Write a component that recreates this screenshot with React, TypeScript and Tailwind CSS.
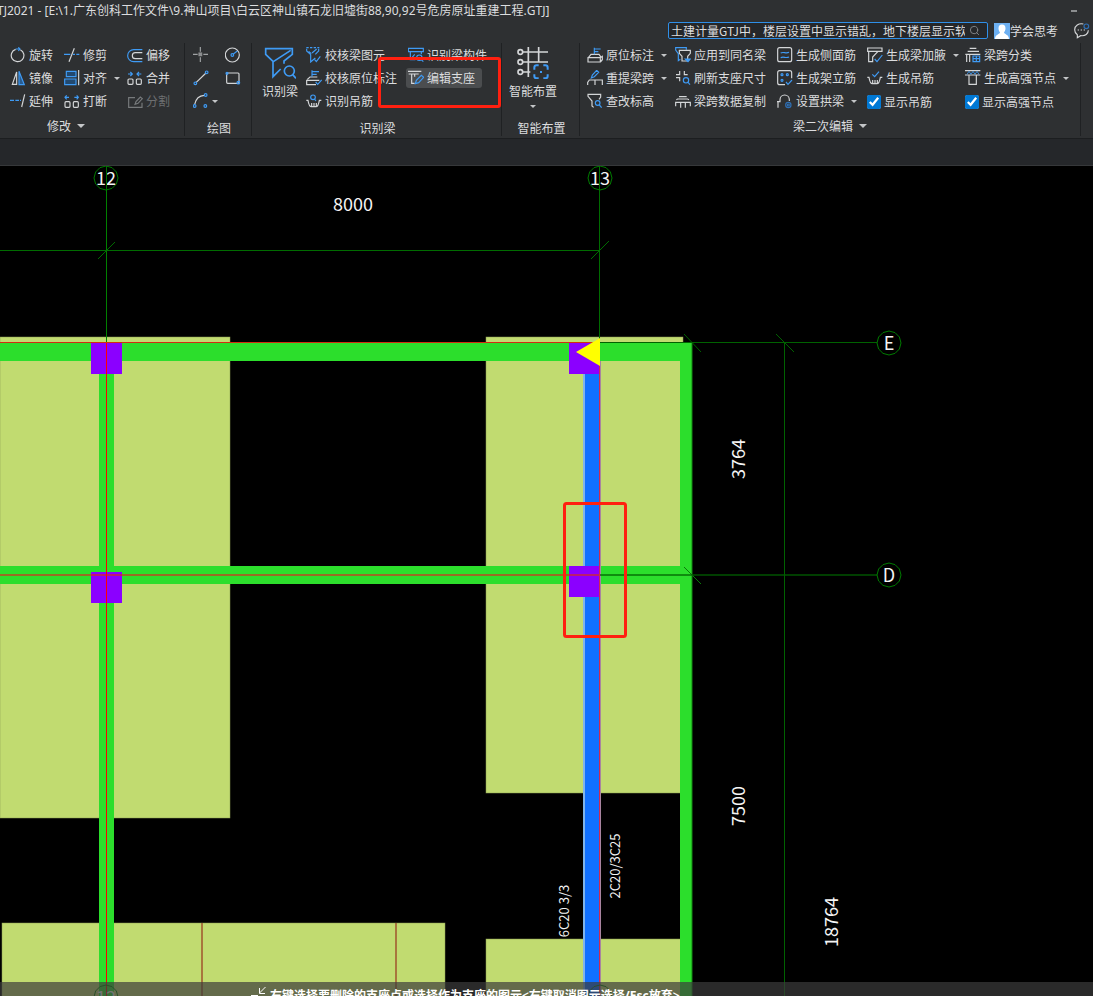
import React, { useState } from 'react'
import clsx from 'clsx'
import { Search } from 'lucide-react'

const W = '#d4d6d8'
const B = '#3f9bf5'

interface GlyphProps {
  children: React.ReactNode
  className?: string
  size?: number
}

// Small ribbon glyphs are drawn on a 48 unit grid, three units per pixel
function Glyph({ children, className = 'h-4 w-4', size = 48 }: GlyphProps) {
  return (
    <svg className={clsx('shrink-0', className)} viewBox={`0 0 ${size} ${size}`} fill="none" stroke={W} strokeWidth={3.5} aria-hidden="true">
      {children}
    </svg>
  )
}

const stamp = (
  <>
    <path d="M4 32L12 22H36L43 32M3 32H40V45H3ZM40 45L46 38V28L40 32" />
    <path d="M22 22V2M22 6H41M22 14H34" stroke={B} />
  </>
)

const basket = <path d="M1 22H6C8 34 12 41 16 41H30C34 41 38 34 40 22H46M17 30V40M24 30V40M31 30V40" />

const icons = {
  rotate: (
    <>
      <path d="M31 8A19 19 0 1 1 17 7" />
      <path d="M17 6H29M25 1L30 6L25 12" stroke={B} />
    </>
  ),
  mirror: (
    <>
      <path d="M20 6V43H7Z" />
      <path d="M27 4L43 44H27Z" stroke={B} fill="#2a5c8f" />
    </>
  ),
  extend: (
    <>
      <path d="M0 22H12M16 22H27M30 22H33" stroke={B} />
      <path d="M44 4L35 42" />
    </>
  ),
  trim: (
    <>
      <path d="M0 22H19M27 22H33M37 22H46" stroke={B} />
      <path d="M31 4L15 44" />
    </>
  ),
  align: (
    <>
      <path d="M7 4H36V20H7ZM2 27H36V44H2Z" stroke={B} fill="#22496f" />
      <path d="M44 0V46" />
    </>
  ),
  breakUp: (
    <>
      <rect x="3" y="26" width="15" height="17" rx="3" />
      <rect x="28" y="26" width="15" height="17" rx="3" />
      <path d="M15 13H3M8 7L3 13L8 19M31 13H43M38 7L43 13L38 19" stroke={B} />
    </>
  ),
  merge: (
    <>
      <rect x="3" y="27" width="15" height="16" rx="3" />
      <rect x="28" y="27" width="15" height="16" rx="3" />
      <path d="M3 12H15M10 6L16 12L10 18M43 12H31M36 6L30 12L36 18" stroke={B} />
    </>
  ),
  offset: (
    <>
      <path d="M46 8H20A18 18 0 0 0 20 44H46" stroke={B} />
      <path d="M46 17H25A9 9 0 0 0 25 35H46" />
    </>
  ),
  split: <path d="M24 14H5V43H45V29M24 34L27 26L40 12L46 17L33 31Z" stroke="#777a7c" />,
  point: (
    <>
      <path d="M22 0V14M22 31V45M0 22H14M31 22H45" stroke="#a0a2a4" />
      <rect x="18" y="18" width="8" height="8" stroke="#8c8e90" fill="#8c8e90" />
    </>
  ),
  circle: (
    <>
      <circle cx="22" cy="24" r="21" />
      <path d="M25 21L37 12" stroke={B} />
      <circle cx="22" cy="24" r="4" stroke={B} />
    </>
  ),
  line: (
    <>
      <path d="M9 38L39 9" />
      <circle cx="7" cy="40" r="4" stroke={B} />
      <circle cx="41" cy="7" r="4" stroke={B} />
    </>
  ),
  rect: (
    <>
      <rect x="5" y="9" width="37" height="31" rx="3" />
      <circle cx="6" cy="10" r="3" stroke={B} />
      <circle cx="40" cy="38" r="4" stroke={B} />
    </>
  ),
  arc: (
    <>
      <path d="M5 34C8 20 18 8 34 7" />
      <circle cx="5" cy="39" r="4" stroke={B} />
      <circle cx="38" cy="6" r="4" stroke={B} />
      <circle cx="37" cy="39" r="4" stroke={B} />
    </>
  ),
  checkBeam: (
    <>
      <path d="M1 2H40" stroke={B} strokeDasharray="7 4" />
      <path d="M2 5V12L14 23V45L28 33M38 5V12L28 22M8 13L16 20M32 6L18 18M26 38L31 44L43 28" stroke={B} />
    </>
  ),
  checkStamp: (
    <>
      <path d="M30 44H2V31H40M4 28L12 21H34" />
      <path d="M18 20V1M18 5H39M18 13H32M29 36L35 43L47 30" stroke={B} />
    </>
  ),
  findHook: (
    <>
      {basket}
      <circle cx="21" cy="13" r="7" stroke={B} />
      <path d="M26 19L30 24" stroke={B} />
    </>
  ),
  findPart: (
    <>
      <path d="M1 4H46V14H1ZM7 14V38H22M40 14V22M7 38L20 22" stroke={B} />
      <circle cx="34" cy="32" r="8" stroke={B} />
      <path d="M40 38L46 44" stroke={B} />
    </>
  ),
  editSupport: (
    <>
      <path d="M0 4H40M2 12H32M11 12V40H20M20 12V20" />
      <path d="M22 41L25 31L40 16L47 22L32 38Z" stroke={B} />
    </>
  ),
  stamp,
  respan: (
    <>
      <path d="M2 45V37L7 30H46V45M24 30V45" />
      <path d="M13 24L16 15L29 1L35 7L22 20Z" stroke={B} />
    </>
  ),
  findLevel: (
    <>
      <path d="M20 43L15 39V24L3 10V4H41V12L36 19" />
      <circle cx="32" cy="30" r="7" stroke={B} />
      <path d="M37 36L44 44" stroke={B} />
    </>
  ),
  applyName: (
    <>
      <path d="M16 37L10 41V20L2 9V2H34V8" stroke={B} />
      <path d="M13 10H46V19L38 28V42H21V28L13 19Z" />
      <path d="M31 36H46L39 44Z" stroke={B} fill={B} />
    </>
  ),
  refresh: (
    <>
      <path d="M14 3V14H3M28 3V14H38M14 34V23H3" />
      <circle cx="33" cy="31" r="8" stroke={B} />
      <path d="M39 37L45 44" stroke={B} />
    </>
  ),
  copySpan: <path d="M12 11H35M4 20L8 18H38L42 20M2 40V28H46V40M17 28V44M31 28V44" />,
  sideBar: (
    <>
      <rect x="2" y="2" width="42" height="42" rx="6" />
      <path d="M11 18C20 13 26 21 36 16M11 32C20 27 26 35 36 30" stroke={B} />
    </>
  ),
  frameBar: (
    <>
      <path d="M24 44H8Q2 44 2 38V8Q2 2 8 2H38Q44 2 44 8V25" />
      <g stroke={B}>
        <circle cx="15" cy="14" r="3" />
        <circle cx="31" cy="14" r="3" />
        <circle cx="15" cy="31" r="3" />
        <path d="M27 36L33 43L45 30" />
      </g>
    </>
  ),
  arch: (
    <>
      <path d="M3 44V24M0 26H9V20A14 14 0 0 1 37 20V24" />
      <circle cx="34" cy="36" r="8" stroke="#2e6fb5" />
      <circle cx="34" cy="36" r="3" stroke="#2e6fb5" />
    </>
  ),
  haunch: (
    <>
      <path d="M2 3H45V13H2ZM5 13V44H17V30L33 13" />
      <path d="M23 36L30 44L46 24" stroke={B} />
    </>
  ),
  makeHook: (
    <>
      {basket}
      <path d="M16 13L23 20L36 5" stroke={B} />
    </>
  ),
  classify: (
    <>
      <path d="M14 4H34M8 13H42M1 22H46M5 22V45M14 22V45" />
      <path d="M24 27H44V44H24ZM34 27V44M24 35H44" stroke={B} />
    </>
  ),
  node: (
    <>
      <path d="M0 2H46M0 15H46M12 15V43H34V15" />
      <path d="M6 13L12 4L18 13L24 4L30 13L36 4L42 13" stroke={B} strokeWidth={2.5} />
    </>
  ),
}

type IconName = keyof typeof icons

function Caret({ className, large }: { className?: string; large?: boolean }) {
  return (
    <svg
      className={clsx('shrink-0', large ? 'h-1 w-2' : 'h-[3px] w-1.5', className)}
      viewBox="0 0 6 3"
      preserveAspectRatio="none"
      fill="#c4c6c8"
      aria-hidden="true"
    >
      <path d="M0 0H6L3 3Z" />
    </svg>
  )
}

interface ToolProps {
  icon: IconName
  label?: string
  caret?: boolean
  disabled?: boolean
  active?: boolean
  title?: string
}

function Tool({ icon, label, caret, disabled, active, title }: ToolProps) {
  return (
    <button
      type="button"
      disabled={disabled}
      aria-label={label ?? title}
      className={clsx(
        'flex h-4 w-max items-center gap-[3px] rounded-[3px] whitespace-nowrap',
        active && '-mx-0.5 -my-0.5 h-5 bg-[#4b4d4f] pr-[7px] pl-0.5',
        disabled && 'text-[#6d6f71]'
      )}
    >
      <Glyph>{icons[icon]}</Glyph>
      {label}
      {caret && <Caret className={label ? 'ml-1' : ''} />}
    </button>
  )
}

function Check({ label }: { label: string }) {
  const [on, setOn] = useState(true)
  return (
    <label className="flex h-[18px] w-max items-center gap-[3px] whitespace-nowrap">
      <input type="checkbox" checked={on} onChange={() => setOn(!on)} className="h-3.5 w-3.5 accent-[#0078d4]" />
      {label}
    </label>
  )
}

function Column({ children }: { children: React.ReactNode }) {
  return <div className="flex flex-col gap-[7px]">{children}</div>
}

interface GroupProps {
  title: string
  menu?: boolean
  className: string
  titleClass?: string
  children: React.ReactNode
}

function Group({ title, menu, className, titleClass, children }: GroupProps) {
  return (
    <section className={clsx('relative flex h-[93px] shrink-0 flex-col border-r border-[#1f2123] pt-1', className)}>
      <div className="h-[71px]">{children}</div>
      <div className={clsx('flex justify-center leading-4', titleClass)}>
        {menu ? (
          <button type="button" className="flex items-center gap-1.5">
            {title}
            <Caret large />
          </button>
        ) : (
          <span className="pt-0.5 pl-0.5">{title}</span>
        )}
      </div>
    </section>
  )
}

function Ribbon() {
  return (
    <nav className="flex h-[100px] border-b border-[#1c1e20] pt-1">
      <Group title="修改" menu className="w-[185px]" titleClass="pr-[52px]">
        <div className="grid grid-cols-[54px_63px_1fr] pl-2.5">
          <Column>
            <Tool icon="rotate" label="旋转" />
            <Tool icon="mirror" label="镜像" />
            <Tool icon="extend" label="延伸" />
          </Column>
          <Column>
            <Tool icon="trim" label="修剪" />
            <Tool icon="align" label="对齐" caret />
            <Tool icon="breakUp" label="打断" />
          </Column>
          <Column>
            <Tool icon="offset" label="偏移" />
            <Tool icon="merge" label="合并" />
            <Tool icon="split" label="分割" disabled />
          </Column>
        </div>
      </Group>

      <Group title="绘图" className="w-[67px]">
        <div className="grid grid-cols-[32px_1fr] pl-2">
          <Column>
            <Tool icon="point" title="点" />
            <Tool icon="line" title="直线" />
            <Tool icon="arc" title="弧" caret />
          </Column>
          <Column>
            <Tool icon="circle" title="圆" />
            <Tool icon="rect" title="矩形" />
          </Column>
        </div>
      </Group>

      <Group title="识别梁" className="w-[250px]">
        <div className="grid grid-cols-[44px_102px_1fr] pl-2.5">
          <button type="button" className="flex w-9 flex-col items-center gap-1 leading-4 whitespace-nowrap">
            <Glyph className="h-8 w-8" size={96}>
              <g stroke={B} strokeWidth={5}>
                <path d="M50 66L27 89V43L5 22V5H85V22L60 42V50M80 10L28 44" />
                <circle cx="76" cy="72" r="15" />
                <path d="M86 83L96 94" />
              </g>
            </Glyph>
            识别梁
          </button>
          <Column>
            <Tool icon="checkBeam" label="校核梁图元" />
            <Tool icon="checkStamp" label="校核原位标注" />
            <Tool icon="findHook" label="识别吊筋" />
          </Column>
          <Column>
            <Tool icon="findPart" label="识别梁构件" />
            <Tool icon="editSupport" label="编辑支座" active />
          </Column>
        </div>
        {/* 标记框 */}
        <div className="pointer-events-none absolute top-3.5 left-[126px] h-[51px] w-[123px] rounded-[3px] border-3 border-[#ff2010]" />
      </Group>

      <Group title="智能布置" className="w-[78px]">
        <button type="button" className="ml-[7px] flex w-12 flex-col items-center leading-4 whitespace-nowrap">
          <Glyph className="h-8 w-8" size={96}>
            <g strokeWidth={5}>
              <path d="M16 15H93M16 45H93M16 75H40M34 0V90M65 0V45" />
              <circle cx="10" cy="15" r="7" />
              <circle cx="10" cy="45" r="7" />
              <circle cx="10" cy="75" r="7" />
              <path d="M52 68V62Q52 55 59 55H65M79 55H85Q92 55 92 62V68M92 82V88Q92 94 85 94H79M65 94H59Q52 94 52 88V82" stroke={B} strokeWidth={6} />
              <path d="M69 75H75" stroke={B} strokeWidth={6} />
            </g>
          </Glyph>
          <span className="mt-1">智能布置</span>
          <Caret className="mt-1.5" />
        </button>
      </Group>

      <Group title="梁二次编辑" menu className="w-[501px]">
        <div className="grid grid-cols-[88px_102px_90px_98px_1fr] pl-[7px]">
          <Column>
            <Tool icon="stamp" label="原位标注" caret />
            <Tool icon="respan" label="重提梁跨" caret />
            <Tool icon="findLevel" label="查改标高" />
          </Column>
          <Column>
            <Tool icon="applyName" label="应用到同名梁" />
            <Tool icon="refresh" label="刷新支座尺寸" />
            <Tool icon="copySpan" label="梁跨数据复制" />
          </Column>
          <Column>
            <Tool icon="sideBar" label="生成侧面筋" />
            <Tool icon="frameBar" label="生成架立筋" />
            <Tool icon="arch" label="设置拱梁" caret />
          </Column>
          <Column>
            <Tool icon="haunch" label="生成梁加腋" caret />
            <Tool icon="makeHook" label="生成吊筋" />
            <Check label="显示吊筋" />
          </Column>
          <Column>
            <Tool icon="classify" label="梁跨分类" />
            <Tool icon="node" label="生成高强节点" caret />
            <Check label="显示高强节点" />
          </Column>
        </div>
      </Group>
    </nav>
  )
}

function Header() {
  return (
    <header>
      <div className="flex h-[22px] items-center justify-between pr-4">
        <h1 className="-ml-[3px] font-['Noto_Sans','Noto_Sans_CJK_SC',sans-serif] whitespace-nowrap">
          TJ2021 - [E:\1.广东创科工作文件\9.神山项目\白云区神山镇石龙旧墟街88,90,92号危房原址重建工程.GTJ]
        </h1>
        <button type="button" aria-label="最小化" className="flex h-4 w-1.5 items-center">
          <span className="h-0.5 w-full bg-[#8b8d8f]" />
        </button>
      </div>
      <div className="flex h-[17px] items-center justify-end pr-[3px]">
        <div className="flex h-[17px] w-[320px] items-center rounded-[2px] border border-[#2f8fe8] bg-[#25272a] pr-[7px] pl-0.5">
          <input
            aria-label="搜索"
            defaultValue="土建计量GTJ中，楼层设置中显示错乱，地下楼层显示软件"
            className="h-[15px] min-w-0 flex-1 bg-transparent outline-none"
          />
          <Search className="ml-1 h-[11px] w-[11px] text-[#85888b]" />
        </div>
        <svg className="ml-1.5 h-4 w-4" viewBox="0 0 16 16" aria-hidden="true">
          <rect width="16" height="16" fill="#6db0f2" />
          <path d="M8 1.500C10.500 1.500 11.500 3 11.500 5.500C11.500 7.500 10.500 8.500 10 9.500C10 11 15 11.500 15 16H1C1 11.500 6 11 6 9.500C5.500 8.500 4.500 7.500 4.500 5.500C4.500 3 5.500 1.500 8 1.500Z" fill="#fff" />
        </svg>
        <span>学会思考</span>
        <button type="button" aria-label="消息" className="ml-4">
          <Glyph>
            <path d="M28 3C14 0 2 8 2 20C2 28 6 32 10 35V44L20 38C34 40 43 32 43 22" />
            <circle cx="37" cy="10" r="7" stroke="#2e6fb5" />
            <path d="M11 21H15M20 21H24M29 21H33" />
          </Glyph>
        </button>
      </div>
    </header>
  )
}

const SLABS = [
  { x: 0, y: 171, w: 230, h: 481 },
  { x: 486, y: 171, w: 197, h: 456 },
  { x: 2, y: 757, w: 443, h: 900 },
  { x: 486, y: 773, w: 197, h: 900 },
]

const COLUMNS = [
  { x: 91, y: 177 },
  { x: 91, y: 406 },
  { x: 569, y: 177 },
  { x: 569, y: 400 },
]

const AXES = [
  { x: 106, y: 12, name: '12' },
  { x: 600, y: 12, name: '13' },
  { x: 889, y: 177, name: 'E' },
  { x: 889, y: 409, name: 'D' },
  { x: 106, y: 831, name: '12' },
  { x: 600, y: 831 },
]

const LABELS = [
  { x: 738, y: 293, text: '3764' },
  { x: 738, y: 640, text: '7500' },
  { x: 831, y: 756, text: '18764' },
]

// 轴号外圈是十二边形
const ringPoints = (cx: number, cy: number) =>
  Array.from({ length: 12 }, (_, i) => {
    const a = (i * Math.PI) / 6
    return `${(cx + 12 * Math.sin(a)).toFixed(1)},${(cy - 12 * Math.cos(a)).toFixed(1)}`
  }).join(' ')

function Drawing() {
  return (
    <svg className="absolute inset-0 h-full w-full" fill="none" aria-label="梁平面图">
      {SLABS.map((s, i) => (
        <rect key={i} x={s.x} y={s.y} width={s.w} height={s.h} fill="#c1db70" stroke="#8a9c50" strokeWidth={0.5} />
      ))}
      <path d="M202 757V1600M396 757V1600" stroke="#a0562c" strokeWidth={1.5} />

      {/* 梁 */}
      <g fill="#2cde2c">
        <rect x="0" y="177" width="692" height="18" />
        <rect x="0" y="400" width="692" height="18" />
        <rect x="99" y="177" width="15" height="1500" />
        <rect x="680" y="177" width="12" height="1500" />
      </g>
      <path d="M692 177V1600" stroke="#128a12" />
      <rect x="583" y="195" width="2" height="1500" fill="#80b4ea" />
      <rect x="585" y="195" width="14" height="1500" fill="#1070ff" />
      <rect x="600" y="195" width="1" height="1500" fill="#a884a0" />

      {COLUMNS.map((c, i) => (
        <rect key={i} x={c.x} y={c.y} width="31" height="31" fill="#8b00ff" />
      ))}

      {/* 轴线 */}
      <path d="M106.500 0V177" stroke="#008000" />
      <path d="M599.500 0V177M0 84.500H599M98 93L115 76M591 93L609 75" stroke="#006c00" />
      <path d="M600 176.500H877M684 168L701 186M776 168L794 186M784.500 177V1600" stroke="#006200" />
      <path d="M684 401L701 418" stroke="#0a7a0a" />
      <path d="M600 409H877" stroke="#006000" strokeWidth={2} strokeOpacity={0.65} />
      <path d="M0 176.500H600" stroke="#d42c10" />
      <path d="M0 409H599" stroke="#d42c20" strokeWidth={2} strokeOpacity={0.65} />
      <path d="M106.500 177V1600" stroke="#ff0000" />
      <path d="M599.500 177V1600" stroke="#d02850" />
      <path d="M576 186L600 172V200Z" fill="#ffff00" />

      {/* 轴号与标注 */}
      {AXES.map((a, i) => (
        <g key={i}>
          <polygon points={ringPoints(a.x, a.y)} stroke="#007c00" />
          {a.name && (
            <text x={a.x} y={a.y + 7} fill="#f4f4f4" fontSize="18" textAnchor="middle">{a.name}</text>
          )}
        </g>
      ))}
      <path d="M106.500 0V24M599.500 0V24" stroke="#007000" />
      <text x="353" y="45" fill="#f4f4f4" fontSize="18" textAnchor="middle">8000</text>
      {LABELS.map((l) => (
        <text key={l.text} transform={`translate(${l.x + 7} ${l.y}) rotate(-90)`} fill="#f4f4f4" fontSize="18" textAnchor="middle">{l.text}</text>
      ))}
      <g fill="#f4f4f4" fontSize="13" textAnchor="middle">
        <text transform="translate(620 700) rotate(-90)">2C20/3C25</text>
        <text transform="translate(569 745) rotate(-90)">6C20 3/3</text>
      </g>

      <rect x="564.500" y="337.500" width="61" height="133" rx="2" stroke="#ff2010" strokeWidth={3} />
    </svg>
  )
}

export default function App() {
  return (
    <div className="flex h-screen flex-col overflow-hidden bg-[#2e3032] font-['Noto_Sans_CJK_SC','Noto_Sans',sans-serif] text-xs leading-4 text-[#dcdddf]">
      <Header />
      <Ribbon />
      <div className="h-[27px] border-b border-[#36383a] bg-[#25272a]" />
      <main className="relative min-h-0 flex-1 overflow-hidden bg-black">
        <Drawing />
        <footer className="absolute inset-x-0 bottom-0 flex h-3.5 gap-[3px] overflow-hidden bg-[#3c3c3c]/70 pt-1 pl-[251px] font-['Noto_Sans','Noto_Sans_CJK_SC',sans-serif] font-bold whitespace-nowrap text-white">
          <svg className="h-4 w-4 shrink-0" viewBox="0 0 16 16" fill="none" stroke="#fff" aria-hidden="true">
            <path d="M14.500 1L8.500 7M8.500 2V7.500H14M0 9.500H7" />
          </svg>
          <p className="shrink-0 pt-0.5">右键选择要删除的支座点或选择作为支座的图元&lt;右键取消图元选择/Esc放弃&gt;</p>
        </footer>
      </main>
    </div>
  )
}
